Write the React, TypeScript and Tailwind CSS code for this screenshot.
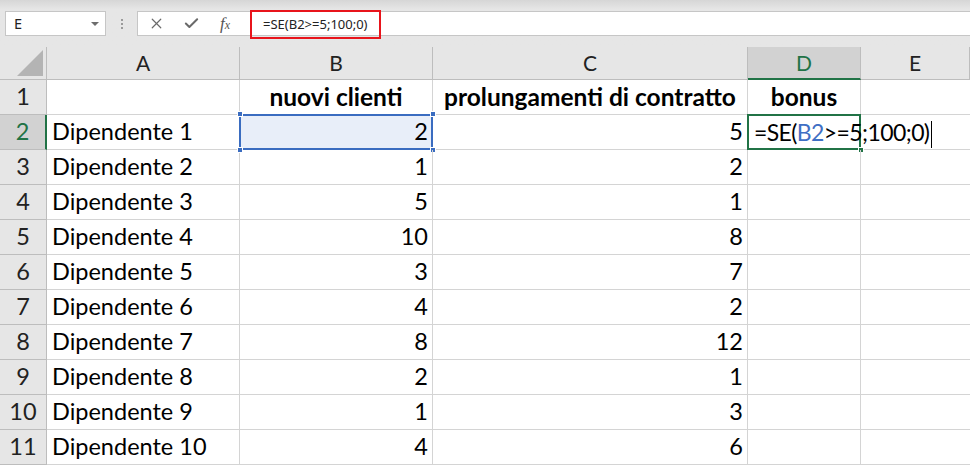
import { Check, X } from "lucide-react";

const data = [
  ["Dipendente 1", 2, 5],
  ["Dipendente 2", 1, 2],
  ["Dipendente 3", 5, 1],
  ["Dipendente 4", 10, 8],
  ["Dipendente 5", 3, 7],
  ["Dipendente 6", 4, 2],
  ["Dipendente 7", 8, 12],
  ["Dipendente 8", 2, 1],
  ["Dipendente 9", 1, 3],
  ["Dipendente 10", 4, 6],
];

const cols = ["A", "B", "C", "D", "E"];

const Handle = ({ className }: { className: string }) => (
  <span className={`absolute w-[6px] h-[6px] bg-[#3a6cc0] border border-white ${className}`} />
);

// ==================== JSX ==========================
export default function App() {
  return (
    <div className="w-[970px] h-[468px] overflow-hidden bg-white font-['Lato',sans-serif] text-black">
      {/* formula bar */}
      <div className="h-[47px] bg-gradient-to-b from-[#d6d6d6] via-[#e6e6e6] via-[20%] to-[#e6e6e6] flex items-start pt-[11px]">
        <div className="ml-[5px] w-[101px] h-[25px] bg-white border border-[#c6c6c6] flex items-center justify-between pl-[8px] pr-[6px] font-['Noto_Sans',sans-serif] text-[14.5px] text-[#222]">
          E
          <span className="w-0 h-0 border-l-[4px] border-r-[4px] border-t-[4px] border-l-transparent border-r-transparent border-t-[#6d6d6d]" />
        </div>
        <div className="w-[31px] flex flex-col items-center gap-[2px] pt-[8px]">
          <span className="w-[2px] h-[2px] bg-[#9a9a9a]" />
          <span className="w-[2px] h-[2px] bg-[#9a9a9a]" />
          <span className="w-[2px] h-[2px] bg-[#9a9a9a]" />
        </div>
        <div className="w-[112px] h-[25px] bg-white border border-[#c6c6c6] border-r-0 flex items-center">
          <X className="w-[17px] h-[17px] text-[#6a6a6a] ml-[10px]" strokeWidth={1.7} />
          <Check className="w-[17px] h-[17px] text-[#6a6a6a] ml-[18px]" strokeWidth={2.8} />
          <span className="ml-[20px] font-['Liberation_Serif',serif] italic text-[17px] leading-none text-[#555]">
            f<span className="text-[12px]">x</span>
          </span>
        </div>
        <div className="flex-1 h-[25px] bg-white border-y border-[#c6c6c6] relative">
          <div className="absolute left-[1px] top-[-2px] w-[131px] h-[29px] border-2 border-[#e8141b] flex items-center pl-[11px] font-['Noto_Sans',sans-serif] text-[13px] text-[#222]">
            =SE(B2&gt;=5;100;0)
          </div>
        </div>
      </div>

      {/* grid */}
      <div className="grid grid-cols-[47px_193px_193px_315px_113px_109px] grid-rows-[33px] auto-rows-[35px] text-[23.5px]">
        <div className="bg-[#e6e6e6] border-r border-b border-[#bdbdbd] flex items-end justify-end pr-[3px] pb-[3px]">
          <span className="w-0 h-0 [border-bottom:26px_solid_#b4b4b4] [border-left:26px_solid_transparent]" />
        </div>
        {cols.map((c) => (
          <div
            key={c}
            className={
              c === "D"
                ? "bg-[#d2d2d2] border-r border-[#bdbdbd] border-b-2 border-b-[#217346] flex items-center justify-center text-[21px] text-[#217346]"
                : "bg-[#e6e6e6] border-r border-b border-[#bdbdbd] flex items-center justify-center text-[21px] text-[#222]"
            }
          >
            {c}
          </div>
        ))}

        {/* row 1 */}
        <div className="bg-[#e6e6e6] border-r border-b border-[#bdbdbd] flex items-center justify-center text-[#222]">1</div>
        <div className="border-r border-b border-[#d4d4d4]" />
        <div className="border-r border-b border-[#d4d4d4] flex items-center justify-center font-bold text-[24.5px]">nuovi clienti</div>
        <div className="border-r border-b border-[#d4d4d4] flex items-center justify-center font-bold text-[24.5px] whitespace-nowrap">prolungamenti di contratto</div>
        <div className="border-r border-b border-[#d4d4d4] flex items-center justify-center font-bold text-[24.5px]">bonus</div>
        <div className="border-b border-[#d4d4d4]" />

        {data.map(([name, b, c], i) => {
          const row = i + 2;
          const first = row === 2;
          return [
            <div
              key={`h${row}`}
              className={
                first
                  ? "bg-[#d2d2d2] border-r-2 border-r-[#217346] border-b border-b-[#bdbdbd] flex items-center justify-center text-[#217346]"
                  : "bg-[#e6e6e6] border-r border-b border-[#bdbdbd] flex items-center justify-center text-[#222]"
              }
            >
              {row}
            </div>,
            <div key={`a${row}`} className="border-r border-b border-[#d4d4d4] flex items-center pl-[5px]">
              {name}
            </div>,
            <div
              key={`b${row}`}
              className={`relative border-r border-b border-[#d4d4d4] flex items-center justify-end pr-[4px] ${first ? "bg-[#e8eef9]" : ""}`}
            >
              {b}
              {first && (
                <>
                  <span className="absolute left-[-1px] top-[-1px] right-[-1px] bottom-[-1px] border-2 border-[#3a6cc0]" />
                  <Handle className="left-[-3px] top-[-4px]" />
                  <Handle className="right-[-4px] top-[-4px]" />
                  <Handle className="left-[-3px] bottom-[-4px]" />
                  <Handle className="right-[-4px] bottom-[-4px]" />
                </>
              )}
            </div>,
            <div key={`c${row}`} className="border-r border-b border-[#d4d4d4] flex items-center justify-end pr-[4px]">
              {c}
            </div>,
            <div
              key={`d${row}`}
              className={`relative border-b border-[#d4d4d4] flex items-center ${first ? "" : "border-r"}`}
            >
              {first && (
                <>
                  <span className="absolute left-[-1px] top-[-1px] right-0 bottom-[-1px] border-2 border-[#217346]" />
                  <span className="absolute right-[-3px] bottom-[-4px] w-[6px] h-[6px] bg-[#217346] border border-white" />
                  <span className="relative pl-[6px] whitespace-nowrap text-[23px] tracking-[-0.6px]">
                    =SE(<span className="text-[#3f6fc4]">B2</span>&gt;=5;100;0)
                    <span className="inline-block w-[1px] h-[27px] bg-black align-middle ml-[2px]" />
                  </span>
                </>
              )}
            </div>,
            <div key={`e${row}`} className="border-b border-[#d4d4d4]" />,
          ];
        })}
      </div>
    </div>
  );
}
